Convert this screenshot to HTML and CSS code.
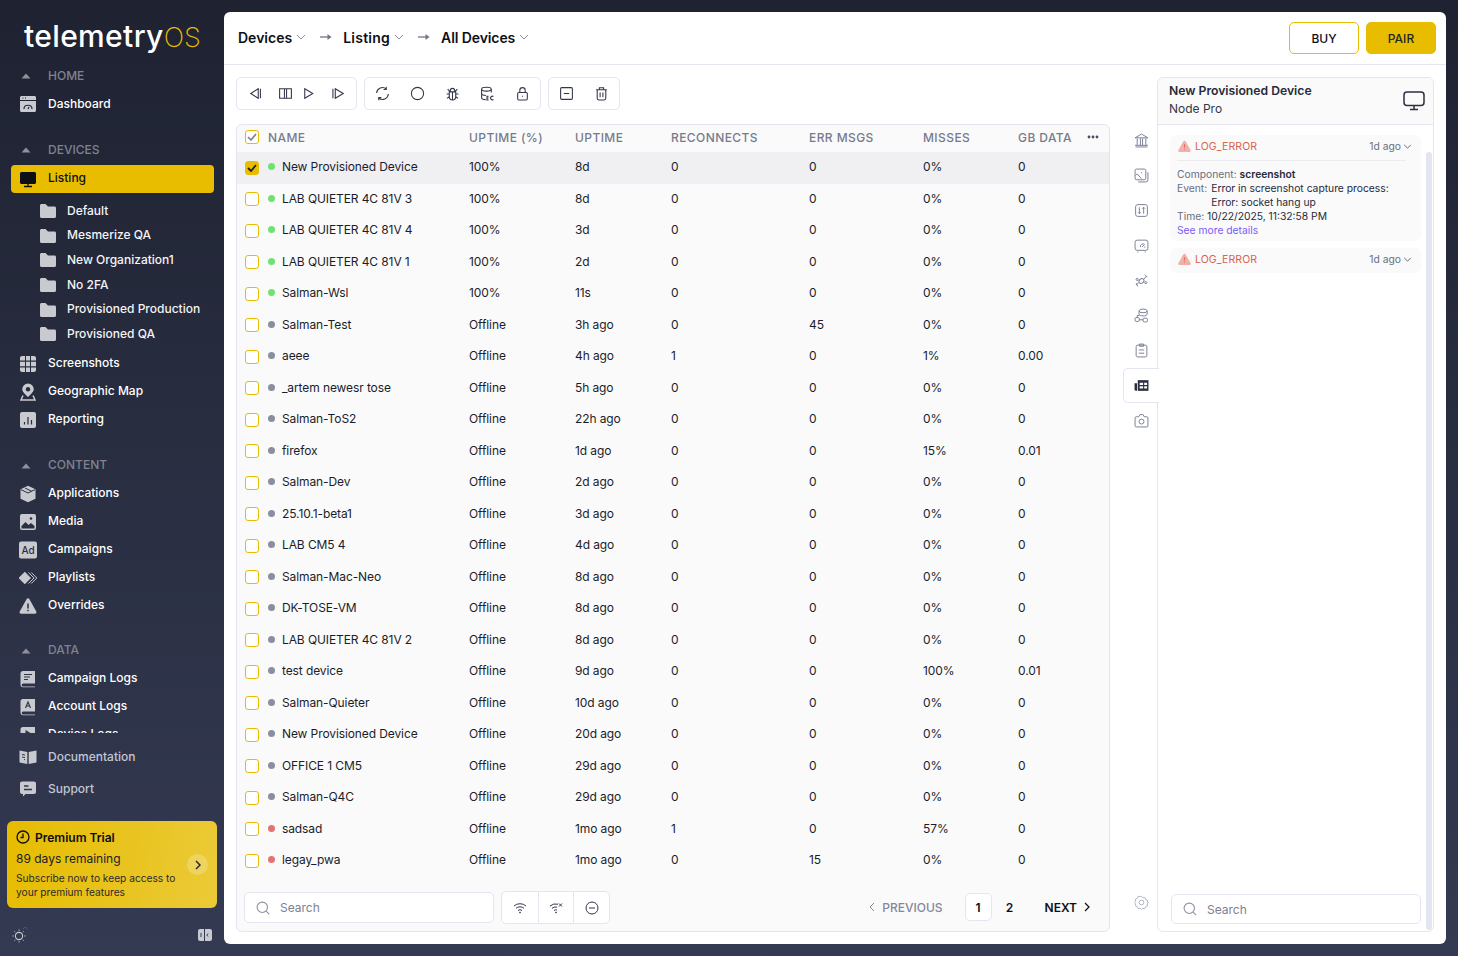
FILE: index.html
```html
<!DOCTYPE html>
<html lang="en">
<head>
<meta charset="utf-8">
<title>telemetryOS</title>
<link rel="stylesheet" href="styles.css">
</head>
<body>
<svg class="defs" width="0" height="0">
  <symbol id="folder" viewBox="0 0 16 16"><path d="M0 2.500C0 1.700.7 1 1.500 1h4l2.500 2.500h6.500c.8 0 1.500.7 1.500 1.500v8.500c0 .8-.7 1.500-1.500 1.500h-13C.7 15 0 14.300 0 13.500z" fill="currentColor"/></symbol>
  <symbol id="tri" viewBox="0 0 10 6"><path d="M5 .5 9.500 5.500H.5z" fill="currentColor"/></symbol>
  <symbol id="chev" viewBox="0 0 10 6"><path d="M1 1l4 4 4-4" fill="none" stroke="currentColor" stroke-width="1"/></symbol>
  <symbol id="arrow" viewBox="0 0 12 8"><path d="M0 4h9" stroke="currentColor" stroke-width="1.300"/><path d="M7.500 1l4 3-4 3z" fill="currentColor"/></symbol>
  <symbol id="warn" viewBox="0 0 14 14"><path d="M7 .8c.6 0 1 .3 1.300.8l5.200 9.100c.6 1.100-.1 2.300-1.300 2.300H1.800C.6 13-.1 11.800.5 10.700L5.700 1.600C6 1.100 6.400.8 7 .8z" fill="#f0b1a9"/><path d="M7 4.500v3.500M7 9.300v1.200" stroke="#dc6a5d" stroke-width="1.100"/></symbol>
  <symbol id="search" viewBox="0 0 14 14"><circle cx="6.300" cy="6.300" r="5.200" fill="none" stroke="currentColor" stroke-width="1.100"/><path d="M10.200 10.200l3 3" stroke="currentColor" stroke-width="1.100"/></symbol>
</svg>

<div class="app">
  <aside class="sidebar">
    <div class="logo"><span class="logo-a">telemetry</span><span class="logo-b">OS</span></div>
    <nav class="nav">
      <div class="sec"><svg class="tri"><use href="#tri"/></svg>HOME</div>
      <a class="item"><svg class="ic" viewBox="0 0 18 18"><path d="M2.500 1h13C16.300 1 17 1.700 17 2.500V5H1V2.500C1 1.700 1.700 1 2.500 1zM1 6h16v9.500c0 .8-.7 1.500-1.500 1.500h-13C1.700 17 1 16.300 1 15.500z" fill="currentColor"/><path d="M5 14c0-5 8-5 8 0M9 14l1-2" fill="none" stroke="#262b3c" stroke-width="1.200"/><path d="M3.500 3h1M6 3h1" stroke="#262b3c"/></svg>Dashboard</a>

      <div class="sec gap"><svg class="tri"><use href="#tri"/></svg>DEVICES</div>
      <a class="item active"><svg class="ic" viewBox="0 0 18 18"><path d="M2.500 2h13C16.300 2 17 2.700 17 3.500v9c0 .8-.7 1.500-1.500 1.500h-13C1.700 14 1 13.300 1 12.500v-9C1 2.700 1.700 2 2.500 2z" fill="currentColor"/><path d="M9 14v2.500M5 16.500h8" stroke="currentColor" stroke-width="1.300"/></svg>Listing</a>
      <div class="folders">
        <a class="folder"><svg class="fic"><use href="#folder"/></svg>Default</a>
        <a class="folder"><svg class="fic"><use href="#folder"/></svg>Mesmerize QA</a>
        <a class="folder"><svg class="fic"><use href="#folder"/></svg>New Organization1</a>
        <a class="folder"><svg class="fic"><use href="#folder"/></svg>No 2FA</a>
        <a class="folder"><svg class="fic"><use href="#folder"/></svg>Provisioned Production</a>
        <a class="folder"><svg class="fic"><use href="#folder"/></svg>Provisioned QA</a>
      </div>
      <a class="item"><svg class="ic" viewBox="0 0 18 18"><path d="M3 1h3v4.500H1V3c0-1.100.9-2 2-2zM7 1h4v4.500H7zM12 1h3c1.100 0 2 .9 2 2v2.500h-5zM1 6.800h5v4.400H1zM7 6.800h4v4.400H7zM12 6.800h5v4.400h-5zM1 12.500h5V17H3c-1.100 0-2-.9-2-2zM7 12.500h4V17H7zM12 12.500h5V15c0 1.100-.9 2-2 2h-3z" fill="currentColor"/></svg>Screenshots</a>
      <a class="item"><svg class="ic" viewBox="0 0 18 18"><path d="M9 .5a5.800 5.800 0 0 1 5.800 5.800C14.800 9.500 9 14 9 14S3.200 9.500 3.200 6.300A5.800 5.800 0 0 1 9 .5z" fill="currentColor"/><circle cx="9" cy="6.300" r="2.200" fill="#262b3c"/><path d="M4 12.500l-2 4.500h14l-2-4.500" fill="none" stroke="currentColor" stroke-width="1.500"/></svg>Geographic Map</a>
      <a class="item"><svg class="ic" viewBox="0 0 18 18"><rect x="1" y="1" width="16" height="16" rx="2" fill="currentColor"/><path d="M5.500 11v2.500M9 6v7.500M12.500 9v4.500" stroke="#262b3c" stroke-width="1.200"/></svg>Reporting</a>

      <div class="sec gap"><svg class="tri"><use href="#tri"/></svg>CONTENT</div>
      <a class="item"><svg class="ic" viewBox="0 0 18 18"><path d="M9 .7l7.500 3.600v9.400L9 17.300 1.500 13.700V4.300z" fill="currentColor"/><path d="M2 4.600l7 3.400 7-3.400M6 3l6.500 3.200" fill="none" stroke="#2a2f41" stroke-width="1"/></svg>Applications</a>
      <a class="item"><svg class="ic" viewBox="0 0 18 18"><rect x="1" y="1" width="16" height="16" rx="2" fill="currentColor"/><path d="M2.500 15.500V13l4-4 3 3 2.500-2 3.500 3v2.500z" fill="#2a2f41"/><circle cx="12" cy="5.500" r="1.300" fill="#2a2f41"/></svg>Media</a>
      <a class="item"><svg class="ic" viewBox="0 0 18 18"><rect width="18" height="17" y=".5" rx="2" fill="currentColor"/><text x="2.600" y="13" class="ad-t">Ad</text></svg>Campaigns</a>
      <a class="item"><svg class="ic" viewBox="0 0 18 18"><path d="M5.800 2.800L12 9l-6.200 6.200L-.4 9z" fill="currentColor"/><path d="M9.500 3.500L15 9l-5.500 5.500M12.300 3.500L17.800 9l-5.500 5.500" fill="none" stroke="currentColor" stroke-width="1"/></svg>Playlists</a>
      <a class="item"><svg class="ic" viewBox="0 0 18 18"><path d="M9 1.200c.5 0 1 .3 1.300.8l7 12.500c.5 1-.2 2.200-1.300 2.200H2c-1.100 0-1.800-1.200-1.300-2.200L7.700 2c.3-.5.800-.8 1.300-.8z" fill="currentColor"/><path d="M9 6.500v5M9 12.700v1.600" stroke="#2a2f41" stroke-width="1.500"/></svg>Overrides</a>

      <div class="sec gap2"><svg class="tri"><use href="#tri"/></svg>DATA</div>
      <a class="item"><svg class="ic" viewBox="0 0 18 18"><path d="M4 1h12v12.500H4.200a1.500 1.500 0 0 0 0 3H16v.8H4A2.500 2.500 0 0 1 1.500 15V3.500A2.500 2.500 0 0 1 4 1z" fill="currentColor"/><path d="M5 4.500h8M5 7h6M5 9.500h4" stroke="#2e3346" stroke-width="1.200"/></svg>Campaign Logs</a>
      <a class="item"><svg class="ic" viewBox="0 0 18 18"><path d="M4 1h12v12.500H4.200a1.500 1.500 0 0 0 0 3H16v.8H4A2.500 2.500 0 0 1 1.500 15V3.500A2.500 2.500 0 0 1 4 1z" fill="currentColor"/><path d="M6.500 10l2.500-6 2.500 6M7.500 8h3" fill="none" stroke="#2e3346" stroke-width="1.100"/></svg>Account Logs</a>
      <a class="item"><svg class="ic" viewBox="0 0 18 18"><path d="M4 1h12v12.500H4.200a1.500 1.500 0 0 0 0 3H16v.8H4A2.500 2.500 0 0 1 1.500 15V3.500A2.500 2.500 0 0 1 4 1z" fill="currentColor"/><path d="M6.500 4l5 3-5 3z" fill="#2e3346"/></svg>Device Logs</a>
    </nav>
    <div class="links">
      <a class="link"><svg class="ic" viewBox="0 0 18 18"><path d="M.5 2.500L8.300 4v12L.5 14.500zM9.700 4l7.800-1.500v12L9.700 16z" fill="currentColor"/><path d="M3 6.500l3 .5M3 9l3 .5M5 11.500l1 .2" stroke="#30354a"/></svg>Documentation</a>
      <a class="link"><svg class="ic" viewBox="0 0 18 18"><path d="M3 1.500h12c1.100 0 2 .9 2 2v8.500c0 1.100-.9 2-2 2H6.500L4 16.500V14H3c-1.100 0-2-.9-2-2V3.500c0-1.100.9-2 2-2z" fill="currentColor"/><path d="M5 6h4.500M5 9.500h8" stroke="#30354a" stroke-width="1.300"/></svg>Support</a>
    </div>
    <div class="trial">
      <div class="trial-h"><svg class="clock" viewBox="0 0 14 14"><circle cx="7" cy="7" r="6" fill="none" stroke="currentColor" stroke-width="1.300"/><path d="M7 3.500V7.500H4.500" fill="none" stroke="currentColor" stroke-width="1.300"/></svg>Premium Trial</div>
      <div class="trial-d">89 days remaining</div>
      <div class="trial-s">Subscribe now to keep access to<br>your premium features</div>
      <span class="trial-go"><svg viewBox="0 0 8 10" width="8" height="10"><path d="M2 1l4 4-4 4" fill="none" stroke="#1d2030" stroke-width="1.400"/></svg></span>
    </div>
    <div class="foot">
      <svg viewBox="0 0 18 18" width="18" height="18"><circle cx="8" cy="10" r="3.600" fill="none" stroke="currentColor" stroke-width="1.100"/><path d="M8 3.500v1.200M8 15.300v1.200M1.500 10h1.200M13.300 10h1.200M3.400 5.400l.8.8M11.800 13.800l.8.800M3.400 14.600l.8-.8M11.800 6.200l.8-.8" stroke="currentColor"/><path d="M12 3l2-2 2.500 2" fill="none" stroke="#5b6075" stroke-width=".8"/></svg>
      <svg viewBox="0 0 14 12" width="14" height="12"><path d="M2 0h4v12H2C.9 12 0 11.100 0 10V2C0 .9.900 0 2 0zM7 0h5c1.100 0 2 .9 2 2v8c0 1.100-.9 2-2 2H7z" fill="currentColor"/><path d="M3 4v4M10 4.500L8.800 6 10 7.500" stroke="#33384e" fill="none"/></svg>
    </div>
  </aside>

  <main class="main">
    <header class="topbar">
      <div class="crumbs">
        <b>Devices</b><svg class="chev"><use href="#chev"/></svg>
        <svg class="arrow"><use href="#arrow"/></svg>
        <b>Listing</b><svg class="chev"><use href="#chev"/></svg>
        <svg class="arrow"><use href="#arrow"/></svg>
        <b>All Devices</b><svg class="chev"><use href="#chev"/></svg>
      </div>
      <div class="actions"><button class="btn buy">BUY</button><button class="btn pair">PAIR</button></div>
    </header>

    <div class="content">
      <section class="left">
        <div class="tools">
          <div class="tgroup">
            <span class="tb"><svg viewBox="0 0 14 14"><path d="M10.500 2.500v9L3.500 7zM12.500 2.500v9" /></svg></span>
            <span class="tb wide">
              <svg viewBox="0 0 14 14"><path d="M1.500 2.500h4.500v9H1.500zM8 2.500h4.500v9H8zM6 2.500h2M6 11.500h2"/></svg>
              <svg viewBox="0 0 14 14"><path d="M3.500 2.500v9l7.500-4.500z"/></svg>
            </span>
            <span class="tb"><svg viewBox="0 0 14 14"><path d="M4 2.500v9l7.500-4.500zM1.800 2.500v9"/></svg></span>
          </div>
          <div class="tgroup">
            <span class="tb"><svg viewBox="0 0 14 14"><path d="M1.500 6.500a5.500 5.500 0 0 1 9-3.700M12.500 7.500a5.500 5.500 0 0 1-9 3.700"/><path d="M10.500 .8v2.400H8M3.500 13.200v-2.400H6"/></svg></span>
            <span class="tb"><svg viewBox="0 0 14 14"><circle cx="7" cy="7" r="5.700"/></svg></span>
            <span class="tb"><svg viewBox="0 0 14 14"><path d="M4 5.500h6V10a3 3 0 0 1-6 0zM5 5.500V4.200a2 2 0 0 1 4 0v1.300M7 5.500v7M4 7.500H1.500M10 7.500h2.500M4 10l-2.200 1.500M10 10l2.200 1.500M4.500 5L2.500 3M9.500 5l2-2"/></svg></span>
            <span class="tb"><svg viewBox="0 0 14 14"><ellipse cx="6" cy="3" rx="4.500" ry="1.800"/><path d="M1.500 3v8c0 1 2 1.800 4 1.800M10.500 3v3M1.500 7c0 1 2 1.800 4 1.800"/><path d="M8 9.500H6.500V13H8M6.500 11.200H8M12.500 9.800a1.700 1.700 0 1 0 0 2.800"/></svg></span>
            <span class="tb"><svg viewBox="0 0 14 14"><rect x="2.500" y="6" width="9" height="7" rx="1"/><path d="M4.500 6V4a2.500 2.500 0 0 1 5 0v2M7 9v1"/></svg></span>
          </div>
          <div class="tgroup">
            <span class="tb"><svg viewBox="0 0 14 14"><rect x="1.500" y="1.500" width="11" height="11" rx="1"/><path d="M4.500 7h5"/></svg></span>
            <span class="tb"><svg viewBox="0 0 14 14"><path d="M2 3.500h10M5 3.500V1.700h4v1.800M3 3.500v8a1.500 1.500 0 0 0 1.500 1.500h5a1.500 1.500 0 0 0 1.500-1.500v-8M5.700 6v4.500M8.300 6v4.500"/></svg></span>
          </div>
        </div>

        <div class="tablebox">
          <div class="row head">
            <div class="name"><span class="cb"><svg viewBox="0 0 10 8" width="10" height="8"><path d="M1 4l3 3 5-6" fill="none" stroke="#7b7e90" stroke-width="1.600"/></svg></span>NAME</div>
            <div>UPTIME (%)</div><div>UPTIME</div><div>RECONNECTS</div><div>ERR MSGS</div><div>MISSES</div><div class="last">GB DATA<svg class="more" viewBox="0 0 12 4" width="12" height="4"><circle cx="2" cy="2" r="1.400"/><circle cx="6" cy="2" r="1.400"/><circle cx="10" cy="2" r="1.400"/></svg></div>
          </div>
          <div class="row sel"><div class="name"><span class="cb on"><svg viewBox="0 0 10 8" width="10" height="8"><path d="M1 4l3 3 5-6" fill="none" stroke="#1d2030" stroke-width="1.800"/></svg></span><i class="dot g"></i>New Provisioned Device</div><div>100%</div><div>8d</div><div>0</div><div>0</div><div>0%</div><div>0</div></div>
          <div class="row"><div class="name"><span class="cb"></span><i class="dot g"></i>LAB QUIETER 4C 81V 3</div><div>100%</div><div>8d</div><div>0</div><div>0</div><div>0%</div><div>0</div></div>
          <div class="row"><div class="name"><span class="cb"></span><i class="dot g"></i>LAB QUIETER 4C 81V 4</div><div>100%</div><div>3d</div><div>0</div><div>0</div><div>0%</div><div>0</div></div>
          <div class="row"><div class="name"><span class="cb"></span><i class="dot g"></i>LAB QUIETER 4C 81V 1</div><div>100%</div><div>2d</div><div>0</div><div>0</div><div>0%</div><div>0</div></div>
          <div class="row"><div class="name"><span class="cb"></span><i class="dot g"></i>Salman-Wsl</div><div>100%</div><div>11s</div><div>0</div><div>0</div><div>0%</div><div>0</div></div>
          <div class="row"><div class="name"><span class="cb"></span><i class="dot o"></i>Salman-Test</div><div>Offline</div><div>3h ago</div><div>0</div><div>45</div><div>0%</div><div>0</div></div>
          <div class="row"><div class="name"><span class="cb"></span><i class="dot o"></i>aeee</div><div>Offline</div><div>4h ago</div><div>1</div><div>0</div><div>1%</div><div>0.00</div></div>
          <div class="row"><div class="name"><span class="cb"></span><i class="dot o"></i>_artem newesr tose</div><div>Offline</div><div>5h ago</div><div>0</div><div>0</div><div>0%</div><div>0</div></div>
          <div class="row"><div class="name"><span class="cb"></span><i class="dot o"></i>Salman-ToS2</div><div>Offline</div><div>22h ago</div><div>0</div><div>0</div><div>0%</div><div>0</div></div>
          <div class="row"><div class="name"><span class="cb"></span><i class="dot o"></i>firefox</div><div>Offline</div><div>1d ago</div><div>0</div><div>0</div><div>15%</div><div>0.01</div></div>
          <div class="row"><div class="name"><span class="cb"></span><i class="dot o"></i>Salman-Dev</div><div>Offline</div><div>2d ago</div><div>0</div><div>0</div><div>0%</div><div>0</div></div>
          <div class="row"><div class="name"><span class="cb"></span><i class="dot o"></i>25.10.1-beta1</div><div>Offline</div><div>3d ago</div><div>0</div><div>0</div><div>0%</div><div>0</div></div>
          <div class="row"><div class="name"><span class="cb"></span><i class="dot o"></i>LAB CM5 4</div><div>Offline</div><div>4d ago</div><div>0</div><div>0</div><div>0%</div><div>0</div></div>
          <div class="row"><div class="name"><span class="cb"></span><i class="dot o"></i>Salman-Mac-Neo</div><div>Offline</div><div>8d ago</div><div>0</div><div>0</div><div>0%</div><div>0</div></div>
          <div class="row"><div class="name"><span class="cb"></span><i class="dot o"></i>DK-TOSE-VM</div><div>Offline</div><div>8d ago</div><div>0</div><div>0</div><div>0%</div><div>0</div></div>
          <div class="row"><div class="name"><span class="cb"></span><i class="dot o"></i>LAB QUIETER 4C 81V 2</div><div>Offline</div><div>8d ago</div><div>0</div><div>0</div><div>0%</div><div>0</div></div>
          <div class="row"><div class="name"><span class="cb"></span><i class="dot o"></i>test device</div><div>Offline</div><div>9d ago</div><div>0</div><div>0</div><div>100%</div><div>0.01</div></div>
          <div class="row"><div class="name"><span class="cb"></span><i class="dot o"></i>Salman-Quieter</div><div>Offline</div><div>10d ago</div><div>0</div><div>0</div><div>0%</div><div>0</div></div>
          <div class="row"><div class="name"><span class="cb"></span><i class="dot o"></i>New Provisioned Device</div><div>Offline</div><div>20d ago</div><div>0</div><div>0</div><div>0%</div><div>0</div></div>
          <div class="row"><div class="name"><span class="cb"></span><i class="dot o"></i>OFFICE 1 CM5</div><div>Offline</div><div>29d ago</div><div>0</div><div>0</div><div>0%</div><div>0</div></div>
          <div class="row"><div class="name"><span class="cb"></span><i class="dot o"></i>Salman-Q4C</div><div>Offline</div><div>29d ago</div><div>0</div><div>0</div><div>0%</div><div>0</div></div>
          <div class="row"><div class="name"><span class="cb"></span><i class="dot r"></i>sadsad</div><div>Offline</div><div>1mo ago</div><div>1</div><div>0</div><div>57%</div><div>0</div></div>
          <div class="row"><div class="name"><span class="cb"></span><i class="dot r"></i>legay_pwa</div><div>Offline</div><div>1mo ago</div><div>0</div><div>15</div><div>0%</div><div>0</div></div>

          <div class="tfoot">
            <label class="search"><svg class="sic"><use href="#search"/></svg><span>Search</span></label>
            <div class="filters">
              <span class="fb"><svg viewBox="0 0 14 12"><path d="M1 4a9 9 0 0 1 12 0M3 6.300a6 6 0 0 1 8 0M5 8.500a3 3 0 0 1 4 0"/><circle cx="7" cy="10.500" r=".5"/></svg></span>
              <span class="fb"><svg viewBox="0 0 14 12"><path d="M1 4a9 9 0 0 1 8-1.800M3 6.300a6 6 0 0 1 5-1.200M5 8.500a3 3 0 0 1 3-.5M10 1.500l3 3M13 1.500l-3 3"/><circle cx="7" cy="10.500" r=".5"/></svg></span>
              <span class="fb"><svg class="big" viewBox="0 0 14 14"><circle cx="7" cy="7" r="6"/><path d="M4 7h6"/></svg></span>
            </div>
            <div class="pager">
              <span class="prev"><svg viewBox="0 0 6 10" width="6" height="10"><path d="M5 1L1 5l4 4" fill="none" stroke="currentColor"/></svg>PREVIOUS</span>
              <span class="pg cur">1</span>
              <span class="pg">2</span>
              <span class="next">NEXT<svg viewBox="0 0 6 10" width="6" height="10"><path d="M1 1l4 4-4 4" fill="none" stroke="currentColor" stroke-width="1.200"/></svg></span>
            </div>
          </div>
        </div>
      </section>

      <div class="rail">
        <span class="ri"><svg viewBox="0 0 14 14"><path d="M1 4.500L7 1l6 3.500zM1.500 13h11M1 11.500h12M3 5v6.500M6 5v6.500M8 5v6.500M11 5v6.500"/></svg></span>
        <span class="ri"><svg viewBox="0 0 14 14"><path d="M2.500 1h7A1.500 1.500 0 0 1 11 2.500v7A1.500 1.500 0 0 1 9.500 11h-7A1.500 1.500 0 0 1 1 9.500v-7A1.500 1.500 0 0 1 2.500 1zM13 4v7a2 2 0 0 1-2 2H4M1.500 7L3 5.500 7 10M6.500 4.500h1"/></svg></span>
        <span class="ri"><svg viewBox="0 0 14 14"><rect x="1.500" y="1.500" width="11" height="11" rx="2"/><path d="M5 4v6M3.700 8.700L5 10l1.300-1.300M9 10V4M7.700 5.300L9 4l1.300 1.300"/></svg></span>
        <span class="ri"><svg viewBox="0 0 14 14"><rect x="1" y="2" width="12" height="9.500" rx="2"/><path d="M3 13h1M10 13h1M6 8.500A2.500 2.500 0 0 1 10 6M7.500 8.500l2-2M10.500 8.500h-1"/></svg></span>
        <span class="ri"><svg viewBox="0 0 14 14"><ellipse cx="7" cy="7.500" rx="2.500" ry="2" transform="rotate(-40 7 7.500)"/><path d="M4.500 9L2 11M2 9.500l1.500 3M9 6l2.500-3M10 1.500l2.500 2.500"/><circle cx="3" cy="6" r="1"/><circle cx="11" cy="9" r="1"/></svg></span>
        <span class="ri"><svg viewBox="0 0 14 14"><ellipse cx="8.500" cy="2.700" rx="3.800" ry="1.700"/><path d="M4.700 2.700v3c0 1 1.800 1.700 3.800 1.700s3.800-.7 3.800-1.700v-3"/><rect x="1" y="9" width="4" height="3.500" rx="1"/><rect x="8.500" y="9.500" width="4" height="3.500" rx="1"/><path d="M3 9V7h2M5 11h3.500"/></svg></span>
        <span class="ri"><svg viewBox="0 0 14 14"><rect x="2" y="2" width="10" height="11" rx="1.500"/><path d="M5 1h4v2H5zM4.500 6.500h5M4.500 9.500h5"/></svg></span>
        <span class="ri cur"><svg viewBox="0 0 14 14"><path d="M3.500 2h10v10H3.500z" fill="#2b2f40"/><path d="M.5 5h2.300v7H2A1.500 1.500 0 0 1 .5 10.500z" fill="#2b2f40"/><path d="M5.300 4.500h3.200v2H5.300zM9.500 4.500h2.700v2H9.500zM5.300 7.700h3.200v2H5.300zM9.500 7.700h2.700v2H9.500z" fill="#fff"/></svg></span>
        <span class="ri"><svg viewBox="0 0 14 14"><path d="M2 3.500h2.500L5.500 1.500h3L9.500 3.500H12A1.200 1.200 0 0 1 13 4.700V12a1 1 0 0 1-1 1H2a1 1 0 0 1-1-1V4.700A1.200 1.200 0 0 1 2 3.500z"/><circle cx="7" cy="8" r="2.300"/></svg></span>
        <span class="ri gear"><svg viewBox="0 0 14 14"><path d="M7 1l1.200 1.500 1.900-.2.700 1.800 1.800.7-.2 1.900L13.500 7l-1.100 1.300.2 1.900-1.800.7-.7 1.800-1.900-.2L7 13.500l-1.200-1-1.900.2-.7-1.800-1.800-.7.2-1.900L.5 7l1.100-1.300-.2-1.900 1.800-.7.7-1.800 1.900.2z"/><circle cx="7" cy="7" r="2.200"/></svg></span>
      </div>

      <section class="panel">
        <div class="p-head">
          <div class="p-text"><div class="p-t">New Provisioned Device</div><div class="p-s">Node Pro</div></div>
          <svg viewBox="0 0 22 20" width="22" height="20"><rect x="1" y="1" width="20" height="13.500" rx="3" fill="none" stroke="#2b3042" stroke-width="1.500"/><path d="M11 14.500v3.500M7 18.500h8" stroke="#2b3042" stroke-width="1.500"/></svg>
        </div>
        <div class="p-body">
          <div class="logs">
            <div class="log">
              <div class="log-h"><svg class="warn"><use href="#warn"/></svg><span class="log-n">LOG_ERROR</span><span class="log-a">1d ago<svg class="chev2"><use href="#chev"/></svg></span></div>
              <div class="log-b">
                <div><span class="k">Component:</span> <b>screenshot</b></div>
                <div class="ev"><span class="k">Event:</span><span>Error in screenshot capture process:<br>Error: socket hang up</span></div>
                <div><span class="k">Time:</span> 10/22/2025, 11:32:58 PM</div>
                <a class="more-l">See more details</a>
              </div>
            </div>
            <div class="log">
              <div class="log-h"><svg class="warn"><use href="#warn"/></svg><span class="log-n">LOG_ERROR</span><span class="log-a">1d ago<svg class="chev2"><use href="#chev"/></svg></span></div>
            </div>
            <label class="search psearch"><svg class="sic"><use href="#search"/></svg><span>Search</span></label>
          </div>
          <div class="sbar"></div>
        </div>
      </section>
    </div>
  </main>
</div>
</body>
</html>
```

FILE: styles.css
```css
* { box-sizing: border-box; }
html, body { margin: 0; height: 100%; }
body {
  font-family: "Inter", "Noto Sans", sans-serif;
  font-size: 12px;
  color: #1a1d2b;
  background: linear-gradient(180deg, #1e2231 0%, #343a52 100%);
  overflow: hidden;
}
.defs { position: absolute; }
a { color: inherit; text-decoration: none; }
button { font-family: inherit; }

.app { display: flex; height: 956px; width: 1458px; }

/* Sidebar */
.sidebar { width: 224px; flex: none; display: flex; flex-direction: column; color: #fff; }
.logo { height: 62px; padding: 17px 0 0 24px; line-height: 38px; white-space: nowrap; }
.logo-a { font-size: 30px; font-weight: 500; color: #fff; letter-spacing: .35px; }
.logo-b { font-size: 27px; font-weight: 200; color: #e8bd00; }
.nav { flex: none; height: 671px; overflow: hidden; padding: 0 10px 0 11px; }
.sec { height: 28px; display: flex; align-items: center; font-size: 12px; color: #80838f; padding: 0 0 2px 10px; font-weight: 500; }
.sec.gap { margin-top: 18px; }
.sec.gap2 { margin-top: 17px; }
.tri { width: 10px; height: 6px; color: #8e919c; margin-right: 17px; margin-top: 2px; }
.item { height: 28px; display: flex; align-items: center; padding: 0 0 2px 8px; font-size: 12px; font-weight: 500; color: #fff; border-radius: 4px; }
.item.active { background: #e8bd00; color: #0d0f17; margin-top: 1px; padding-bottom: 4px; }
.ic { width: 18px; height: 18px; margin: 2px 11px 0 0; flex: none; color: #c9cad0; }
.active .ic { color: #0d0f17; margin-top: 4px; }
.ad-t { font: 500 10px "Inter", sans-serif; fill: #2a2f41; }
.folders { padding: 6px 0 3px 29px; }
.folder { height: 24.6px; display: flex; align-items: center; padding-bottom: 2px; font-size: 12px; font-weight: 500; color: #f4f4f6; white-space: nowrap; }
.fic { width: 16px; height: 16px; margin: 2px 11px 0 0; color: #c9cad0; }
.links { padding: 8px 0 0 11px; }
.link { height: 32px; display: flex; align-items: center; padding: 0 0 2px 8px; font-size: 12px; font-weight: 500; color: #c3c6d2; }
.trial { position: relative; margin: 16px 7px 0; height: 87px; border-radius: 6px; padding: 8px 9px 0; color: #1a1c26; background: linear-gradient(100deg, #e6bc00 0%, #ebca38 100%); }
.trial-h { display: flex; align-items: center; font-size: 12px; font-weight: 600; color: #0c0d14; height: 16px; }
.clock { width: 14px; height: 14px; margin-right: 5px; }
.trial-d { font-size: 12px; margin-top: 5px; line-height: 18px; }
.trial-s { font-size: 10.2px; line-height: 14px; margin-top: 3px; color: #2a2b2a; }
.trial-go { position: absolute; right: 9px; top: 33px; width: 21px; height: 21px; border-radius: 50%; background: rgba(255,255,255,.22); display: flex; align-items: center; justify-content: center; }
.foot { flex: 1; display: flex; align-items: center; justify-content: space-between; padding: 6px 12px 0 11px; color: #c9cad0; }

/* Main */
.main { flex: 1; margin: 12px 12px 12px 0; background: #fff; border-radius: 6px; display: flex; flex-direction: column; min-width: 0; }
.topbar { height: 53px; flex: none; border-bottom: 1px solid #e4e5f0; display: flex; align-items: center; justify-content: space-between; padding: 0 10px 0 14px; }
.crumbs { display: flex; align-items: center; font-size: 14px; margin-top: -2px; }
.crumbs b { font-weight: 600; color: #0d0f17; }
.crumbs b:nth-of-type(2) { letter-spacing: .25px; }
.crumbs b:nth-of-type(3) { letter-spacing: -.1px; }
.chev { width: 10px; height: 6px; margin-left: 4px; color: #8d90a0; }
.arrow { width: 12px; height: 8px; margin: 0 11px 0 14px; color: #71758c; }
.actions { display: flex; gap: 7px; }
.btn { width: 70px; height: 32px; border-radius: 5px; font-size: 12px; font-weight: 500; border: 1px solid #e8bd00; background: #fff; color: #0d0f17; padding: 0; }
.pair { background: #e8bd00; color: #23252b; }

.content { flex: 1; display: flex; padding: 12px; min-height: 0; }
.left { width: 874px; flex: none; display: flex; flex-direction: column; }
.tools { display: flex; gap: 7px; height: 33px; flex: none; margin-bottom: 14px; }
.tgroup { display: flex; border: 1px solid #e4e5f0; border-radius: 5px; }
.tb { width: 35px; display: flex; align-items: center; justify-content: center; padding-bottom: 1px; }
.tb.wide { width: 49px; gap: 8px; }
.tb svg { width: 15px; height: 15px; fill: none; stroke: #33374a; stroke-width: 1; }

.tablebox { flex: 1; background: #fafafa; border: 1px solid #e4e5f0; border-radius: 6px; display: flex; flex-direction: column; min-height: 0; }
.row { display: grid; grid-template-columns: 232px 106px 96px 138px 114px 95px 91px; height: 31.5px; align-items: center; font-size: 12px; letter-spacing: -.1px; color: #1a1d2b; }
.row > div { padding-bottom: 2px; }
.row.head { height: 27px; font-size: 12px; font-weight: 500; color: #777a8e; letter-spacing: .42px; padding-bottom: 1px; }
.row.sel { background: #f0f0f3; }
.name { display: flex; align-items: center; padding-left: 8px; white-space: nowrap; }
.cb { width: 14px; height: 14px; border: 1px solid #e8bd00; border-radius: 3px; margin: 2px 9px 0 0; background: #fff; flex: none; display: flex; align-items: center; justify-content: center; }
.row.head .cb { margin-top: 0; }
.cb.on { background: #e8bd00; }
.dot { width: 7px; height: 7px; border-radius: 50%; margin-right: 7px; flex: none; }
.dot.g { background: #6fe372; }
.dot.o { background: #8b8e9f; }
.dot.r { background: #e57373; }
.last { display: flex; align-items: center; }
.more { margin-left: 15px; fill: #4a4d60; }

.tfoot { flex: 1; display: flex; align-items: center; padding: 8px 0 0 7px; }
.search { display: flex; align-items: center; background: #fff; border: 1px solid #e4e5f0; border-radius: 5px; color: #7d8093; font-size: 12px; }
.tfoot .search { width: 250px; height: 31px; padding-left: 11px; }
.sic { width: 14px; height: 14px; margin-right: 10px; color: #8e91a3; }
.filters { display: flex; margin-left: 7px; height: 33px; border: 1px solid #e4e5f0; border-radius: 5px; background: #fff; }
.fb { width: 35.67px; display: flex; align-items: center; justify-content: center; border-left: 1px solid #e4e5f0; }
.fb:first-child { border-left: 0; }
.fb svg { width: 14px; height: 12px; fill: none; stroke: #33374a; stroke-width: 1; }
.fb svg.big { width: 14px; height: 14px; }
.pager { margin-left: auto; display: flex; align-items: center; font-size: 12px; font-weight: 500; padding-right: 19px; margin-top: -1px; }
.prev { color: #85879a; display: flex; align-items: center; gap: 7px; margin-right: 22px; }
.pg { width: 24px; height: 28px; display: flex; align-items: center; justify-content: center; font-weight: 600; color: #0d0f17; }
.pg.cur { width: 27px; background: #fff; border: 1px solid #e4e5f0; border-radius: 5px; margin-right: 6px; }
.next { color: #0d0f17; font-weight: 600; display: flex; align-items: center; gap: 7px; margin-left: 23px; }

/* Rail */
.rail { width: 47px; flex: none; display: flex; flex-direction: column; padding: 46px 0 0 14px; position: relative; z-index: 1; }
.ri { width: 34px; height: 35px; display: flex; align-items: center; justify-content: center; flex: none; }
.ri svg { width: 15px; height: 15px; fill: none; stroke: #7a7e94; stroke-width: .9; }
.ri.cur { background: #fff; border: 1px solid #e4e5f0; border-right: 0; border-radius: 5px 0 0 5px; margin-left: -1px; width: 36px; }
.ri.cur svg { stroke: none; }
.ri.gear { margin-top: auto; margin-bottom: 12px; }
.ri.gear svg { stroke: #b0b3c2; }

/* Panel */
.panel { flex: 1; min-width: 0; border: 1px solid #e4e5f0; border-radius: 6px; display: flex; flex-direction: column; }
.p-head { height: 47px; flex: none; background: #fafafa; border-bottom: 1px solid #e4e5f0; border-radius: 6px 6px 0 0; padding: 0 8px 0 11px; display: flex; justify-content: space-between; align-items: center; }
.p-text { align-self: flex-start; padding-top: 4px; }
.p-t { font-size: 12.2px; font-weight: 600; color: #262a3a; line-height: 18px; }
.p-s { font-size: 12px; color: #343849; line-height: 18px; }
.p-body { flex: 1; display: flex; min-height: 0; position: relative; }
.logs { flex: 1; display: flex; flex-direction: column; padding: 10px 0 7px 12px; min-width: 0; }
.log { background: #fafafa; border-radius: 6px; width: 251px; margin-bottom: 7px; padding: 0 9px 0 8px; flex: none; }
.log-h { height: 25px; padding-bottom: 2px; display: flex; align-items: center; font-size: 10.5px; }
.warn { width: 13px; height: 13px; margin-right: 4px; }
.log-n { color: #d9624f; letter-spacing: .1px; }
.log-a { margin-left: auto; padding-bottom: 1px; color: #6a6e82; display: flex; align-items: center; font-size: 10.3px; }
.chev2 { width: 9px; height: 5px; margin-left: 2px; color: #4a4e62; }
.log-b { margin: 0 6px 0 -1px; padding-top: 6px; border-top: 1px solid #ececf0; font-size: 10.3px; line-height: 14px; height: 81px; color: #262a3a; }
.log-b b { font-weight: 600; }
.k { color: #6a6e82; }
.ev { display: flex; gap: 4px; }
.more-l { color: #7a5cf5; }
.psearch { margin: auto 0 0 1px; width: 250px; height: 30px; padding-left: 11px; flex: none; }
.sbar { width: 6px; flex: none; background: #e3e5f1; border-radius: 3px; margin: 27px 1px 1px 5px; }
```
